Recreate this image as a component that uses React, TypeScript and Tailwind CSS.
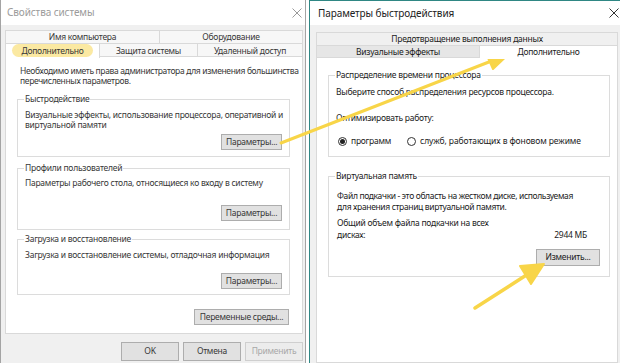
import React from "react";

function CloseX({ color }: { color: string }) {
  return (
    <svg width="10" height="10" viewBox="0 0 10 10" className="shrink-0">
      <path d="M0.5 0.5L9.5 9.5M9.5 0.5L0.5 9.5" stroke={color} strokeWidth="1" />
    </svg>
  );
}

function Btn({ children, className = "" }: { children: React.ReactNode; className?: string }) {
  return (
    <div className={`flex items-center justify-center border border-[#adadad] bg-[#e1e1e1] leading-none ${className}`}>
      {children}
    </div>
  );
}

function Radio({ checked }: { checked?: boolean }) {
  return (
    <span className="w-[9px] h-[9px] rounded-full border border-[#333] bg-white flex items-center justify-center shrink-0">
      {checked && <span className="w-[5px] h-[5px] rounded-full bg-[#222]" />}
    </span>
  );
}

function SystemProps() {
  return (
    <div className="w-[306px] h-full shrink-0 flex flex-col bg-[#f0f0f0] border-l border-r border-[#a4a4a4] text-[#383838]">
      <div className="h-[25px] shrink-0 bg-white flex items-center justify-between pl-[6px] pr-[3px] text-[10px] tracking-[-0.1px] text-[#9b9b9b]">
        <span>Свойства системы</span>
        <CloseX color="#9a9a9a" />
      </div>
      <div className="pl-[4px] pr-[2px] pt-[5px]">
        <div className="flex h-[13px] leading-[12px]">
          <div className="w-[155px] border border-b-0 border-[#d9d9d9] bg-[#f7f7f7] text-center">Имя компьютера</div>
          <div className="flex-1 border border-b-0 border-l-0 border-[#d9d9d9] bg-[#f7f7f7] text-center">Оборудование</div>
        </div>
        <div className="flex h-[14px] leading-[13px]">
          <div className="w-[95px] relative z-10 h-[15px] border border-b-0 border-[#d9d9d9] bg-white flex items-start justify-center">
            <span className="px-[9px] rounded-full bg-[#fbe9a2]">Дополнительно</span>
          </div>
          <div className="w-[98px] border border-l-0 border-[#d9d9d9] bg-[#f7f7f7] text-center">Защита системы</div>
          <div className="flex-1 border border-l-0 border-[#d9d9d9] bg-[#f7f7f7] text-center">Удаленный доступ</div>
        </div>
        <div className="h-[277px] bg-white border border-t-0 border-[#d9d9d9] pt-[9px] flex flex-col">
          <p className="pl-[14px] leading-[10px] tracking-[-0.35px]">
            Необходимо иметь права администратора для изменения большинства
            <br />
            перечисленных параметров.
          </p>
          <fieldset className="mt-[8px] ml-[11px] mr-[12px] border border-[#dcdcdc] px-[6px] pb-[6px] flex flex-col">
            <legend className="px-[1px] leading-[10px]">Быстродействие</legend>
            <p className="mt-[6px] pl-[1px] leading-[10px]">
              Визуальные эффекты, использование процессора, оперативной и
              <br />
              виртуальной памяти
            </p>
            <Btn className="self-end mt-[4px] w-[61px] h-[16px] mr-[1px]">Параметры...</Btn>
          </fieldset>
          <fieldset className="mt-[6px] ml-[11px] mr-[12px] border border-[#dcdcdc] px-[6px] pb-[8px] flex flex-col">
            <legend className="px-[1px] leading-[10px]">Профили пользователей</legend>
            <p className="mt-[5px] pl-[1px] leading-[10px]">Параметры рабочего стола, относящиеся ко входу в систему</p>
            <Btn className="self-end mt-[17px] w-[61px] h-[16px] mr-[1px]">Параметры...</Btn>
          </fieldset>
          <fieldset className="mt-[4px] ml-[11px] mr-[12px] border border-[#dcdcdc] px-[6px] pb-[5px] flex flex-col">
            <legend className="px-[1px] leading-[10px]">Загрузка и восстановление</legend>
            <p className="mt-[6px] pl-[1px] leading-[10px]">Загрузка и восстановление системы, отладочная информация</p>
            <Btn className="self-end mt-[13px] w-[61px] h-[16px] mr-[1px]">Параметры...</Btn>
          </fieldset>
          <Btn className="self-end mt-[14px] mr-[13px] w-[95px] h-[16px]">Переменные среды...</Btn>
        </div>
        <div className="flex justify-end gap-[4px] mt-[8px]">
          <Btn className="w-[58px] h-[19px]">OK</Btn>
          <Btn className="w-[58px] h-[19px]">Отмена</Btn>
          <Btn className="w-[58px] h-[19px] border-[#cfcfcf] bg-[#ececec] text-[#a8a8a8]">Применить</Btn>
        </div>
      </div>
    </div>
  );
}

function PerfOptions() {
  return (
    <div className="w-[314px] h-full shrink-0 ml-[3px] flex flex-col bg-[#f0f0f0] border-l border-t border-[#2f8784] text-[#1c1c1c]">
      <div className="h-[24px] shrink-0 bg-white flex items-center justify-between pl-[8px] pr-[4px] text-[10px] tracking-[-0.1px] text-[#222]">
        <span>Параметры быстродействия</span>
        <CloseX color="#333" />
      </div>
      <div className="flex-1 flex flex-col pl-[6px] pr-[5px] pt-[7px]">
        <div className="h-[13px] leading-[12px] border border-b-0 border-[#d9d9d9] bg-[#f0f0f0] text-center">
          Предотвращение выполнения данных
        </div>
        <div className="flex h-[13px] leading-[12px]">
          <div className="w-[164px] border border-[#d9d9d9] bg-[#e6e6e6] text-center">Визуальные эффекты</div>
          <div className="flex-1 relative z-10 h-[14px] border border-b-0 border-l-0 border-[#d9d9d9] bg-white text-center">
            Дополнительно
          </div>
        </div>
        <div className="flex-1 bg-white border border-t-0 border-[#d9d9d9] pt-[12px] flex flex-col">
          <fieldset className="ml-[11px] mr-[7px] border border-[#dcdcdc] px-[6px] pb-[10px] flex flex-col">
            <legend className="px-[1px] leading-[10px]">Распределение времени процессора</legend>
            <p className="mt-[7px] pl-[1px] leading-[10px]">Выберите способ распределения ресурсов процессора.</p>
            <p className="mt-[16px] pl-[1px] leading-[10px]">Оптимизировать работу:</p>
            <div className="mt-[13px] flex items-center h-[10px] pl-[3px]">
              <Radio checked />
              <span className="ml-[4px]">программ</span>
              <span className="ml-[16px]">
                <Radio />
              </span>
              <span className="ml-[4px] tracking-[-0.1px]">служб, работающих в фоновом режиме</span>
            </div>
          </fieldset>
          <fieldset className="mt-[14px] ml-[11px] mr-[7px] border border-[#dcdcdc] px-[6px] pb-[10px] flex flex-col">
            <legend className="px-[1px] leading-[10px]">Виртуальная память</legend>
            <p className="mt-[9px] pl-[2px] leading-[11px] tracking-[-0.35px]">
              Файл подкачки - это область на жестком диске, используемая
              <br />
              для хранения страниц виртуальной памяти.
            </p>
            <p className="mt-[5px] pl-[2px] leading-[12px]">Общий объем файла подкачки на всех</p>
            <div className="flex justify-between pl-[2px] pr-[16px] leading-[12px]">
              <span>дисках:</span>
              <span>2944 МБ</span>
            </div>
            <Btn className="self-end mt-[8px] w-[64px] h-[17px] mr-[3px]">Изменить...</Btn>
          </fieldset>
        </div>
      </div>
    </div>
  );
}

function Arrows() {
  return (
    <svg className="absolute inset-0 pointer-events-none" width="620" height="363" viewBox="0 0 620 363">
      <g fill="#f8d548" stroke="#f8d548" strokeLinecap="round" strokeLinejoin="round">
        <path d="M281 143 Q 390 101 494 60" fill="none" strokeWidth="3" />
        <path d="M512 51 L485 51 L493 69 Z" strokeWidth="2" />
        <path d="M475 308 L528 274" fill="none" strokeWidth="3.5" />
        <path d="M544 264 L520 266 L531 284 Z" strokeWidth="2" />
      </g>
    </svg>
  );
}

export default function App() {
  return (
    <div className="relative w-[620px] h-[363px] overflow-hidden bg-white flex whitespace-nowrap font-['Noto_Sans',sans-serif] text-[8.5px] tracking-[-0.25px]">
      <SystemProps />
      <PerfOptions />
      <Arrows />
    </div>
  );
}
